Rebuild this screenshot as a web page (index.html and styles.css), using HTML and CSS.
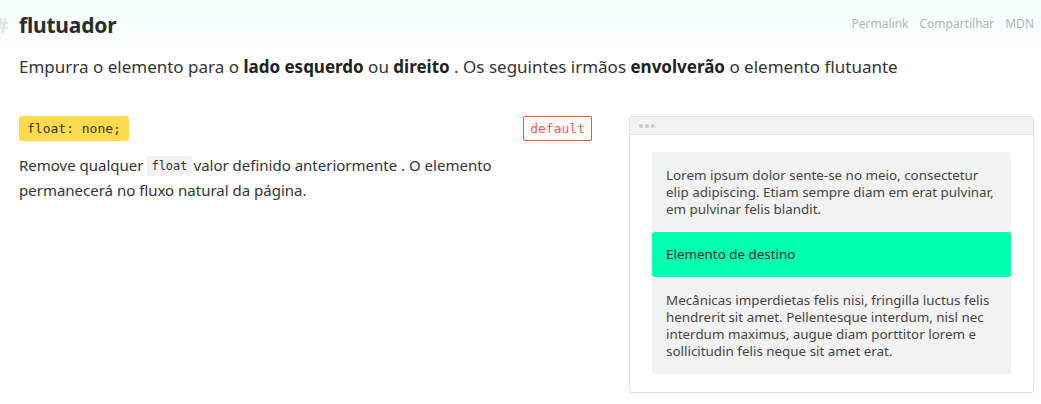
FILE: index.html
```html
<!DOCTYPE html>
<html lang="pt">
<head>
<meta charset="utf-8">
<link rel="stylesheet" href="styles.css">
</head>
<body>
<div class="page">
  <header class="head">
    <h1 class="title"><span class="hash">#</span>flutuador</h1>
    <nav class="links">
      <a>Permalink</a>
      <a>Compartilhar</a>
      <a>MDN</a>
    </nav>
  </header>
  <p class="lead">Empurra o elemento para o <strong>lado esquerdo</strong> ou <strong>direito</strong> . Os seguintes irmãos <strong>envolverão</strong> o elemento flutuante</p>
  <div class="cols">
    <div class="left">
      <div class="row">
        <code class="prop">float: none;</code>
        <span class="badge">default</span>
      </div>
      <p class="desc">Remove qualquer <code class="inline">float</code>valor definido anteriormente . O elemento permanecerá no fluxo natural da página.</p>
    </div>
    <div class="panel">
      <div class="bar"><span class="dot"></span><span class="dot"></span><span class="dot"></span></div>
      <div class="body">
        <div class="box">Lorem ipsum dolor sente-se no meio, consectetur elip adipiscing. Etiam sempre diam em erat pulvinar, em pulvinar felis blandit.</div>
        <div class="box target">Elemento de destino</div>
        <div class="box">Mecânicas imperdietas felis nisi, fringilla luctus felis hendrerit sit amet. Pellentesque interdum, nisl nec interdum maximus, augue diam porttitor lorem e sollicitudin felis neque sit amet erat.</div>
      </div>
    </div>
  </div>
</div>
</body>
</html>
```
FILE: styles.css
```css
* { box-sizing: border-box; }
html, body { margin: 0; padding: 0; }
body {
  font-family: "Noto Sans", "Open Sans", sans-serif;
  color: #333;
  background: #fff;
  width: 1041px;
  height: 404px;
  overflow: hidden;
}
.page {
  padding: 0 7px 0 19px;
  background: linear-gradient(to bottom, #effdfd 0px, #ffffff 48px);
}
.head {
  display: flex;
  align-items: center;
  justify-content: space-between;
  height: 50px;
}
.title {
  position: relative;
  margin: 0;
  font-size: 21px;
  font-weight: 700;
  color: #2b2b2b;
  letter-spacing: -0.2px;
}
.hash {
  position: absolute;
  left: -24px;
  top: 0;
  color: #e4e4e4;
  font-weight: 700;
}
.links {
  display: flex;
  gap: 11px;
  font-size: 12px;
  color: #b3b3b3;
  padding-bottom: 4px;
}
.lead {
  margin: 0;
  font-size: 17px;
  line-height: 34px;
}
.lead strong { font-weight: 700; color: #222; }
.cols {
  display: flex;
  gap: 37px;
  margin-top: 32px;
}
.left { width: 573px; }
.row {
  display: flex;
  justify-content: space-between;
  align-items: flex-start;
}
.prop {
  font-family: "DejaVu Sans Mono", monospace;
  font-size: 13px;
  background: #ffdb4d;
  color: #333;
  padding: 0 8px;
  height: 25px;
  line-height: 25px;
  border-radius: 2px;
}
.badge {
  font-family: "DejaVu Sans Mono", monospace;
  font-size: 13px;
  color: #ff5a4d;
  border: 1px solid #ff4d40;
  border-radius: 2px;
  height: 25px;
  line-height: 23px;
  padding: 0 6px;
}
.desc {
  margin: 12px 0 0;
  font-size: 15px;
  line-height: 25px;
  width: 500px;
}
.inline {
  display: inline-block;
  font-family: "DejaVu Sans Mono", monospace;
  font-size: 12px;
  line-height: 20px;
  background: #f2f2f2;
  padding: 0 4px;
  border-radius: 3px;
  margin-right: 2px;
  vertical-align: 1px;
}
.panel {
  width: 405px;
  border: 1px solid #e3e3e3;
  border-radius: 3px;
  box-shadow: 0 1px 3px rgba(0,0,0,0.08);
  background: #fff;
  overflow: hidden;
  align-self: flex-start;
}
.bar {
  height: 18px;
  background: #f2f2f2;
  border-bottom: 1px solid #e3e3e3;
  display: flex;
  align-items: center;
  gap: 2px;
  padding-left: 9px;
}
.dot {
  width: 4px;
  height: 4px;
  border-radius: 50%;
  background: #c8c8c8;
}
.body {
  padding: 17px 22px 18px 22px;
}
.box {
  background: #f2f2f2;
  border-radius: 3px;
  font-size: 13.4px;
  line-height: 17px;
  padding: 15px 14px 14px;
  color: #444;
}
.box.target {
  background: #00ffb0;
  color: #333;
  padding: 14px 14px 14px;
}
```
